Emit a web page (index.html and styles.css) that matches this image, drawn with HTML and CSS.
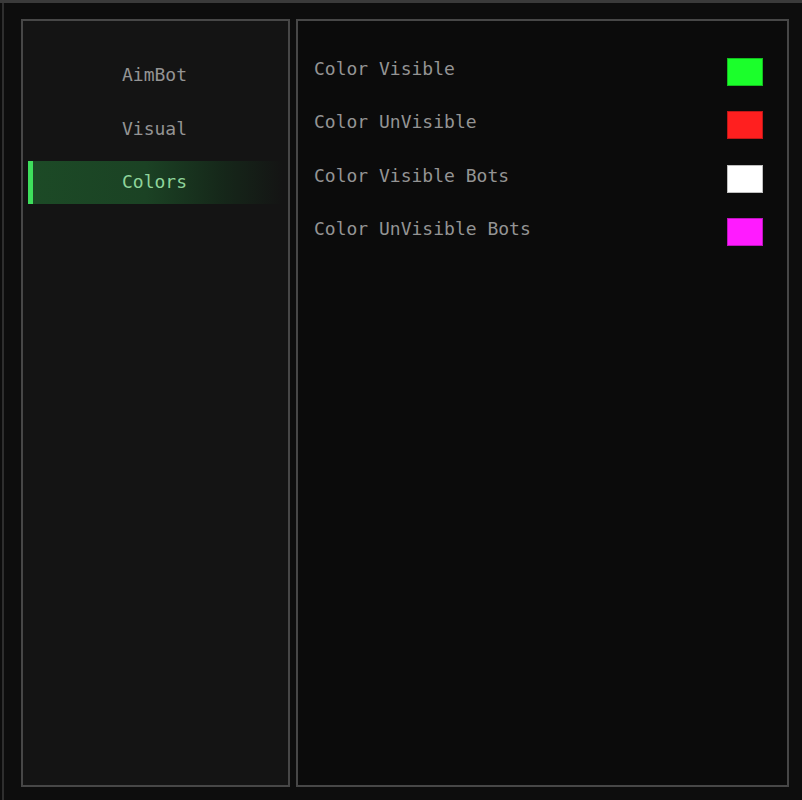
FILE: index.html
```html
<!DOCTYPE html>
<html>
<head>
<meta charset="utf-8">
<link rel="stylesheet" href="styles.css">
</head>
<body>
<div class="frame">
  <div class="window">
    <aside class="sidebar">
      <nav class="nav">
        <div class="nav-item">AimBot</div>
        <div class="nav-item">Visual</div>
        <div class="nav-item active">Colors</div>
      </nav>
    </aside>
    <main class="content">
      <div class="row"><span class="label">Color Visible</span><span class="swatch green"></span></div>
      <div class="row"><span class="label">Color UnVisible</span><span class="swatch red"></span></div>
      <div class="row"><span class="label">Color Visible Bots</span><span class="swatch white"></span></div>
      <div class="row"><span class="label">Color UnVisible Bots</span><span class="swatch magenta"></span></div>
    </main>
  </div>
</div>
</body>
</html>
```
FILE: styles.css
```css
* { box-sizing: border-box; }
html, body { margin: 0; padding: 0; background: #0c0c0c; }
body {
  width: 802px;
  height: 800px;
  overflow: hidden;
  font-family: "DejaVu Sans Mono", monospace;
  font-size: 18px;
  color: #949494;
}
.frame {
  height: 800px;
  border-top: 3px solid #3a3a3a;
  padding-left: 2px;
}
.window {
  height: 797px;
  border-left: 2px solid #2e2e2e;
  display: flex;
  gap: 6px;
  padding: 16px 13px 13px 17px;
  background: #0d0d0d;
}
.sidebar {
  width: 269px;
  background: #141414;
  border: 2px solid #474747;
  padding: 33px 5px 0 5px;
}
.nav {
  display: flex;
  flex-direction: column;
  gap: 10.5px;
}
.nav-item {
  height: 43px;
  display: flex;
  align-items: center;
  justify-content: center;
  padding-right: 2px;
  padding-bottom: 2px;
}
.nav-item.active {
  color: #8fd49b;
  border-left: 5px solid #3edf5c;
  padding-right: 7px;
  background: linear-gradient(90deg, #1c4a26 0%, #1b4224 45%, rgba(22, 48, 28, 0.7) 75%, rgba(20, 20, 20, 0) 100%);
}
.content {
  flex: 1;
  background: #0b0b0b;
  border: 2px solid #474747;
  padding: 37px 24px 0 15px;
  display: flex;
  flex-direction: column;
  gap: 25.3px;
}
.row {
  display: flex;
  align-items: flex-start;
  justify-content: space-between;
  height: 28px;
}
.label {
  line-height: 20px;
  padding-top: 1px;
  padding-left: 1px;
}
.swatch {
  width: 36px;
  height: 28px;
  border: 1px solid rgba(0, 0, 0, 0.25);
}
.green { background: #1bff2b; }
.red { background: #ff1f1f; }
.white { background: #ffffff; }
.magenta { background: #ff1bff; }
```
